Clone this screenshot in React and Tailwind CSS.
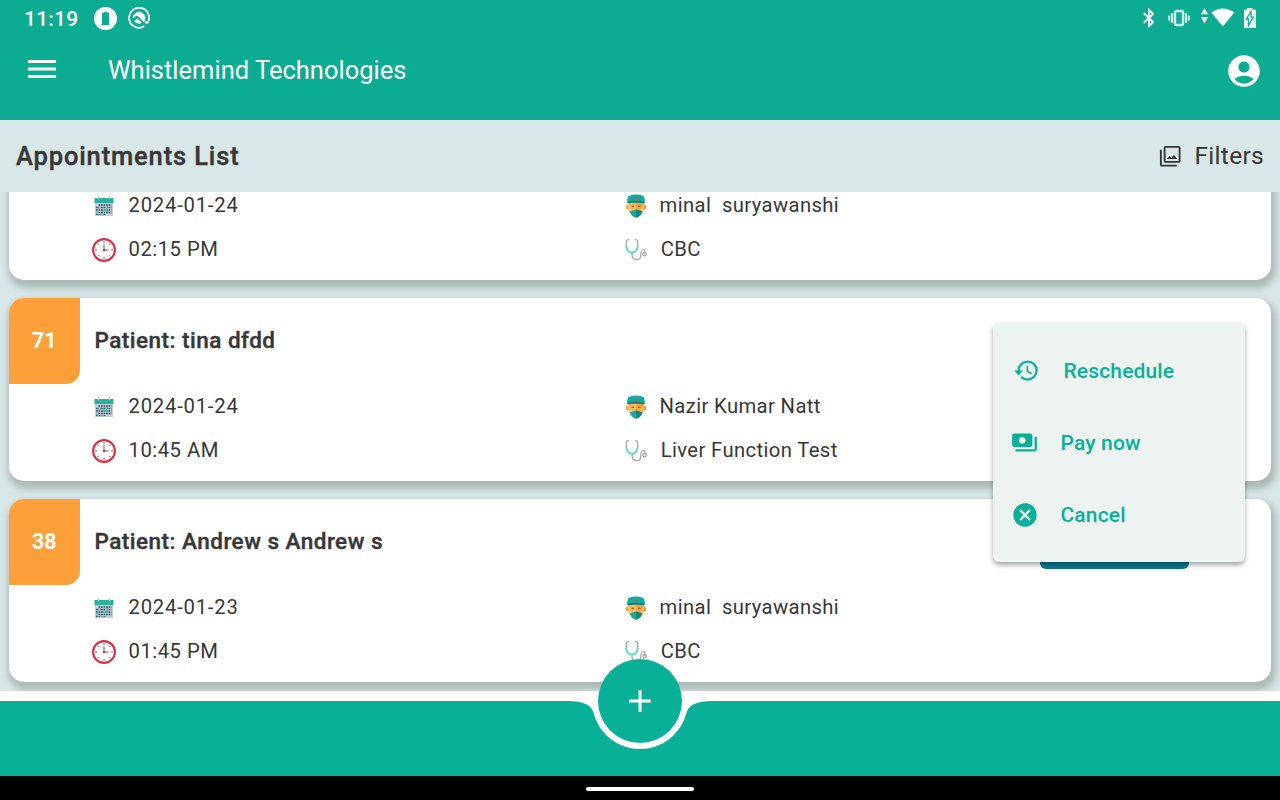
import React from "react";
import {
  MdMenu,
  MdAccountCircle,
  MdFilter,
  MdHistory,
  MdPayments,
  MdCancel,
} from "react-icons/md";

function StatusBar() {
  return (
    <div className="flex h-9 items-center justify-between pl-6 pr-[23px] text-white">
      <div className="flex items-center">
        <span className="w-[70px] pt-[2px] text-[21px] leading-[35px] font-medium tracking-[0.2px]">11:19</span>
        <svg className="size-[23px]" viewBox="0 0 23 23">
          <circle cx="11.5" cy="11.5" r="11.5" fill="#fff" />
          <path d="M8 6h1.7V4.8h3.6V6H15v12H8z" fill="#0bac91" />
        </svg>
        <svg className="ml-[10.5px] size-[22px]" viewBox="0 0 22 22" fill="none" stroke="#fff">
          <path d="M16.6 19.1A10 10 0 1 1 19.4 16.3" strokeWidth="1.8" />
          <path d="M19.3 16.4l-2.2-2" strokeWidth="2" />
          <path d="M5.4 12A5.800 5.800 0 1 1 15.800 14.400L9 8.200z" fill="#fff" strokeWidth="1" />
          <path d="M4.800 12.6L8.6 9.300 15.6 16" stroke="#0bac91" strokeWidth="1.3" />
          <path d="M6.2 14.6q3.8 3.600 8 1.200L9 11.400z" fill="#fff" stroke="none" />
        </svg>
      </div>
      <div className="flex items-center">
        <svg className="h-[20px] w-[14px]" viewBox="0 0 14 20" fill="none" stroke="#fff" strokeWidth="1.9">
          <path d="M1.500 5l9.700 9L7 18.200V1.800L11.200 6l-9.700 9" />
        </svg>
        <svg className="mb-px ml-[12.5px] h-[18px] w-[22px] opacity-80" viewBox="0 0 22 18" fill="none" stroke="#fff">
          <rect x="7" y="2" width="8" height="14" rx="1" strokeWidth="2.400" />
          <path d="M4 4v10M18 4v10" strokeWidth="2.200" />
          <path d="M1.2 6.5v5M20.8 6.5v5" strokeWidth="2" />
        </svg>
        <svg className="mb-px ml-[10px] h-[20px] w-[35px]" viewBox="0 0 35 20" fill="#fff">
          <path d="M4.500 0l3.500 6.200H1zM4.500 15.800L8 9H1z" />
          <path d="M11.300 4.500Q23 -3.400 34.300 4.500L22.800 18.500z" />
        </svg>
        <svg className="mb-px ml-[8px] h-[20px] w-[14px]" viewBox="0 0 14 20">
          <path d="M1 1.700h3V0h5.500v1.700h3.300V20H1z" fill="#fff" />
          <path d="M8 3.700L3.300 11H5.400V17.700L10.400 9.200H8z" fill="#fff" stroke="#0bac91" strokeWidth="1.3" />
        </svg>
      </div>
    </div>
  );
}

function Calendar() {
  return (
    <svg className="h-[20px] w-[20px]" viewBox="0 0 20 20">
      <path d="M1 6.5h18V20H1z" fill="#c4cedb" />
      <path d="M.5 2h19v5H.5z" fill="#27b39b" />
      <path d="M4.5.2v3M15.5.2v3" stroke="#c2c8cf" strokeWidth="1.3" />
      <g stroke="#3e5263" strokeWidth="1.6" strokeDasharray="1.8 .7">
        <path d="M4.5 9h13M2 11.5h15.5M2 14h15.5M2 16.5h15.5" />
        <path d="M2 18.6h10" strokeWidth="1" />
      </g>
      <path d="M4.5 10.7h2v1.6h-2zM9.5 13.2h4v1.6h-4zM2 15.7h2v1.6H2zM7 17.8h2V19H7zM12 10.7h1.5v1.5H12z" fill="#2ed3a7" />
    </svg>
  );
}

function Clock() {
  return (
    <svg className="size-6" viewBox="0 0 24 24" fill="none">
      <circle cx="12" cy="12" r="10.9" fill="#fff" stroke="#dd2e3f" strokeWidth="2.1" />
      <path
        d="M12 3v2M12 19v2M3 12h2M19 12h2M5.7 5.7l1 1M17.3 17.3l1 1M5.7 18.3l1-1M17.3 6.7l1-1"
        stroke="#555"
        strokeWidth=".9"
      />
      <path d="M12 6v6h4.7" stroke="#666" strokeWidth="1" />
      <circle cx="12" cy="12" r="1.3" fill="#dd2e3f" />
    </svg>
  );
}

function Doctor() {
  return (
    <svg className="h-[24px] w-[22px]" viewBox="0 0 22 24">
      <ellipse cx="2.6" cy="13" rx="1.8" ry="2.5" fill="#f5a13a" />
      <ellipse cx="19.4" cy="13" rx="1.8" ry="2.5" fill="#ef952c" />
      <path d="M3.4 7h15.2v8q-.8 6-7.6 8-6.800-2-7.600-8z" fill="#ffb74f" />
      <path d="M11 7h7.600v8q-.8 6-7.600 8z" fill="#f9a63d" />
      <path d="M3 11.500L6 17M19 11.500L16 17" stroke="#e9ded0" strokeWidth=".9" />
      <path d="M6.500 12.200h2.600M12.900 12.200h2.600" stroke="#6b4a2c" strokeWidth="1" />
      <path d="M5 17.200q3-.4 6-1.700 3 1.300 6 1.700-.8 5-6 6.600-5.200-1.600-6-6.600z" fill="#12aa9c" />
      <path d="M11 15.500q3 1.300 6 1.700-.8 5-6 6.600z" fill="#078a83" />
      <path d="M2.200 8.500Q2 2.800 4.200 1.700 11-.9 17.800 1.700 20 2.800 19.800 8.500z" fill="#0caaa0" />
      <path d="M2.500 8q8.500-2 17 0v1.500q-8.500-2-17 0z" fill="#067d82" />
      <path d="M11 3v3.600M9.200 4.800h3.600" stroke="#d4574b" strokeWidth="1.300" />
    </svg>
  );
}

function Stethoscope() {
  return (
    <svg className="h-[22px] w-[22px]" viewBox="0 0 22 22" fill="none">
      <path d="M4.300 .8H2.500Q1.200.8 1.200 3v5M9.700.8h1.800q1.300 0 1.300 2.200v5" stroke="#888" strokeWidth="1" />
      <path d="M1.300 7q.3 6.300 5.700 6.600 5.400-.3 5.700-6.600M7 13.500v2" stroke="#5ddcbc" strokeWidth="1.900" />
      <path d="M7 15q0 5.800 4.600 5.800 4.100 0 4.100-4.300 0-6 2.600-6 1.800 0 1.800 3" stroke="#a5a5a5" strokeWidth="1.200" />
      <circle cx="19.500" cy="15.200" r="1.700" stroke="#777" strokeWidth="1" />
    </svg>
  );
}

function Detail({ icon, wide, inset, tracking = "tracking-[0.375px]", children }) {
  return (
    <div className="flex h-11 items-center">
      <span className={"flex shrink-0 pt-[2px] " + (wide ? "w-[36.5px]" : "w-[35.5px]")}>
        <span className="flex w-6 justify-center">{icon}</span>
      </span>
      <span className={"whitespace-pre " + (inset ? "pl-[1.200px] " : "") + tracking}>{children}</span>
    </div>
  );
}

function Card({ number, patient, date, time, doctor, test, action }) {
  return (
    <article className="h-[183px] shrink-0 rounded-[15px] bg-white shadow-[2px_5px_7px_3px_rgba(0,0,0,0.2)]">
      <header className="flex h-[86px] items-start">
        {number && (
          <div className="flex h-[85.500px] w-[70.500px] items-center justify-center rounded-tl-[15px] rounded-br-[14px] bg-[#fda03a] pt-px text-[21.500px] font-bold text-white">
            {number}
          </div>
        )}
        <h2 className="pl-[15px] text-[22.500px] leading-[85px] font-medium tracking-[0.480px] [-webkit-text-stroke:0.400px_#373737]">
          {patient}
        </h2>
        {action && <div className="mt-4 mr-[82px] ml-auto h-[54px] w-[149px] rounded-[6px] bg-[#087b8c]" />}
      </header>
      <div className="grid grid-cols-[532px_1fr] pl-[83px] text-[20.250px]">
        <Detail wide tracking="tracking-[0.780px]" icon={<Calendar />}>{date}</Detail>
        <Detail icon={<Doctor />}>{doctor}</Detail>
        <Detail wide tracking="tracking-[0.500px]" icon={<Clock />}>{time}</Detail>
        <Detail inset icon={<Stethoscope />}>{test}</Detail>
      </div>
    </article>
  );
}

function Menu() {
  return (
    <div className="absolute top-[322px] left-[993px] flex h-60 w-[252px] flex-col rounded-[6px] bg-[#edf3f1] pt-[13px] pb-[11px] text-[21px] font-medium tracking-[0.15px] text-[#09b098] shadow-[0_3px_5px_rgba(0,0,0,0.35)]">
      <div className="flex h-[72px] items-center pl-[20px]">
        <MdHistory className="mb-px size-[27px]" />
        <span className="pt-px pl-[23.500px]">Reschedule</span>
      </div>
      <div className="flex h-[72px] items-center pl-[18px]">
        <MdPayments className="mb-px size-[27px]" />
        <span className="pt-px pl-[22.500px]">Pay now</span>
      </div>
      <div className="flex h-[72px] items-center pl-[17.500px]">
        <MdCancel className="mb-px size-[28px]" />
        <span className="pt-px pl-[22px]">Cancel</span>
      </div>
    </div>
  );
}

export default function App() {
  return (
    <div className="relative flex h-[800px] w-[1280px] flex-col overflow-hidden bg-white font-[Roboto,sans-serif] text-[#373737]">
      <div className="h-[120px] shrink-0 bg-[#0bac91]">
        <StatusBar />
        <div className="flex h-[70px] items-center px-6 text-white">
          <MdMenu className="mb-1 size-9 scale-x-[1.04]" />
          <h1 className="pb-[2px] pl-12 text-[25.500px]">Whistlemind Technologies</h1>
          <MdAccountCircle className="-mr-[7px] ml-auto size-[38px]" />
        </div>
      </div>
      <div className="flex h-[72px] shrink-0 items-center justify-between bg-[#d8e7e7] px-4">
        <h2 className="text-[25.500px] font-medium tracking-[0.860px] [-webkit-text-stroke:0.400px_#373737]">Appointments List</h2>
        <div className="flex items-center">
          <MdFilter className="size-[22.500px]" />
          <span className="pl-[12.500px] text-[24.500px] tracking-[0.300px]">Filters</span>
        </div>
      </div>
      <main className="flex h-[499px] shrink-0 flex-col justify-end gap-[18px] overflow-hidden bg-[#d8e7e7] px-[9px] pb-[9px]">
        <Card date="2024-01-24" time="02:15 PM" doctor="minal  suryawanshi" test="CBC" />
        <Card number="71" patient="Patient: tina dfdd" date="2024-01-24" time="10:45 AM" doctor="Nazir Kumar Natt" test="Liver Function Test" />
        <Card number="38" patient="Patient: Andrew s Andrew s" date="2024-01-23" time="01:45 PM" doctor="minal  suryawanshi" test="CBC" action />
      </main>
      <footer className="relative mt-[10px] h-[75px] shrink-0">
        <svg className="block h-[75px] w-[1280px]" viewBox="0 0 1280 75">
          <path d="M0 0H568Q590.500 0 593.450 11.730A48 48 0 0 0 686.550 11.730Q689.500 0 712 0H1280V75H0Z" fill="#09b098" />
        </svg>
        <button className="absolute -top-[42px] left-[598px] flex size-[84px] items-center justify-center rounded-full bg-[#09b098]">
          <svg className="size-[22px]" viewBox="0 0 22 22" stroke="#fff" strokeWidth="3">
            <path d="M11 0v22M0 11h22" />
          </svg>
        </button>
      </footer>
      <div className="flex h-6 shrink-0 items-center justify-center bg-black pt-[2px]">
        <div className="h-1 w-[108px] rounded-full bg-white" />
      </div>
      <Menu />
    </div>
  );
}
